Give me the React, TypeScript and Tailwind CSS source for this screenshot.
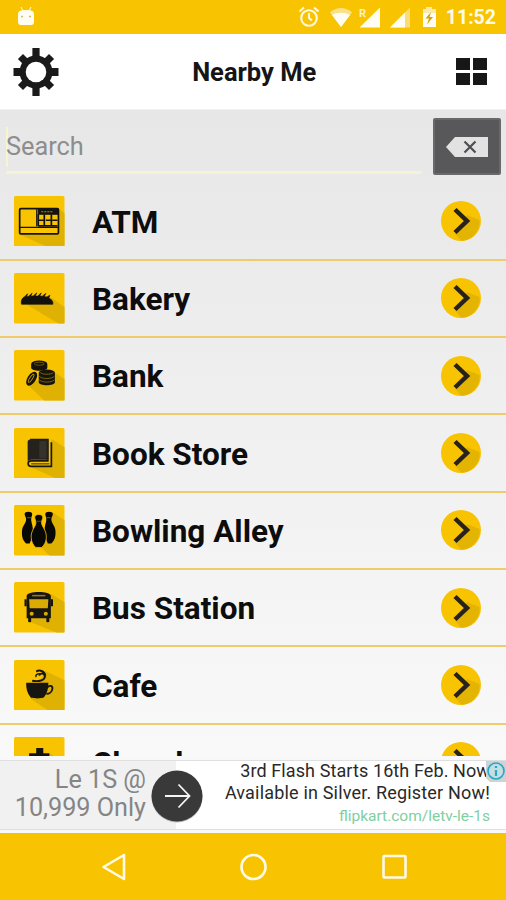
import type { ReactNode } from "react";

type Category = {
	name: string;
	glyph: ReactNode;
	shadow: string;
};

const AtmGlyph = () => (
	<g stroke="#151310" fill="none" strokeWidth="1.7">
		<rect x="5.6" y="12.6" width="38.4" height="25" rx="1.2" />
		<path d="M22.5 13v17M6 31h38" strokeWidth="1.2" />
		<path d="M24 13h20v5H24z" fill="#151310" strokeWidth="1" />
		<path d="M27 15.500h12" stroke="#b68f05" strokeWidth="1" strokeDasharray="2 1" />
		<path d="M24 18v12M30 18v12M37 18v12M24 24h6M31.500 24h5M38 24h5M24 29.500h19" />
	</g>
);

const BreadGlyph = () => (
	<path
		d="M7.500 31c-1-3 .5-6.500 3-7.500l3-3-1 3 2-.5 3.500-3-1.500 3 2.500-.3 3.500-3-1.500 3h2.500l3.500-3-1.500 3 2.500.3 3.500-2.800-1.500 3 2.500.5 3-1.700-1 3c2.500.8 4.500 3 4 6z"
		fill="#12110e"
		stroke="#12110e"
		strokeWidth=".6"
	/>
);

const CoinsGlyph = () => (
	<g fill="#17140e">
		<path d="M17 14v3.500c0 4 16 4 16 0V14z" />
		<ellipse cx="25" cy="13.800" rx="8" ry="3.300" />
		<ellipse cx="25" cy="13.600" rx="5" ry="1.500" fill="none" stroke="#8f7005" strokeWidth=".7" />
		<path d="M24.500 23v9c0 4 16 4 16 0v-9z" />
		<ellipse cx="32.500" cy="22.500" rx="8" ry="3.200" />
		<path
			d="M26 22.300c2 2.300 11 2.300 13 0M25 26c3 3 12 3 15 0M25 29.500c3 3 12 3 15 0"
			fill="none"
			stroke="#a38005"
			strokeWidth=".7"
		/>
		<ellipse cx="17.500" cy="28.500" rx="4.200" ry="7.700" transform="rotate(33 17.500 28.500)" />
		<ellipse
			cx="17"
			cy="28"
			rx="1.300"
			ry="4.700"
			transform="rotate(33 17 28)"
			fill="none"
			stroke="#c69c03"
			strokeWidth=".9"
		/>
	</g>
);

const BookGlyph = () => (
	<g>
		<path d="M16 11.500h17.500v21H17c-4 0-4 5.500 0 5.500h20V14" fill="none" stroke="#1b1916" strokeWidth="1.700" />
		<path d="M16 11.500h18v20H17c-2 0-3 1-3.500 2V14c0-1.500 1-2.500 2.500-2.500z" fill="#25221d" />
		<path d="M25 13h7v17h-7z" fill="#35322c" />
		<path d="M17 35.500h18" stroke="#28241c" strokeWidth="1" />
	</g>
);

const PinsGlyph = () => (
	<g fill="#080806">
		<path d="M10.500 9c0-3 7.500-3 7.500 0 0 2-1 3-1 5 0 4 2.500 7 1.500 14-.6 4-1.500 7-3 10h-3.500C8 35 7.500 29 8 25c.5-5 4-7 4-11 0-2-1.500-3-1.500-5z" />
		<path d="M38.500 9c0-3-7.500-3-7.500 0 0 2 1 3 1 5 0 4-2.500 7-1.500 14 .6 4 1.500 7 3 10H37c4-3 4.500-9 4-13-.5-5-4-7-4-11 0-2 1.500-3 1.500-5z" />
		<path
			d="M20.500 12c0-3.500 8-3.500 8 0 0 2-1.200 3-1.200 5.500 0 4 5.200 7.500 4.700 15-.3 4.500-2 7-4.500 9.500h-6c-2.500-2.500-4.200-5-4.500-9.500-.5-7.500 4.700-11 4.700-15 0-2.500-1.200-3.500-1.200-5.500z"
			stroke="#f2be02"
			strokeWidth=".8"
		/>
		<path d="M13 12.500h4M32 12.500h4M22.300 16h4.500" stroke="#5c4a09" strokeWidth="1" />
	</g>
);

const BusGlyph = () => (
	<g>
		<path
			d="M12.500 14c0-3 6-4 12-4s12 1 12 4v22H35v3c0 1-3 1-3 0v-3H17v3c0 1-3 1-3 0v-3h-1.500z"
			fill="#171511"
		/>
		<path d="M15 17h19l-.5 9h-18z" fill="#d9ab03" />
		<path d="M18 13.500h13" stroke="#9d7c08" strokeWidth="1.500" />
		<path d="M11.500 17v7M37.500 17v7" stroke="#171511" strokeWidth="2.200" />
		<circle cx="17.500" cy="31.500" r="2" fill="#d8ab08" />
		<circle cx="31.500" cy="31.500" r="2" fill="#d8ab08" />
	</g>
);

const CupGlyph = () => (
	<g fill="none" stroke="#171511">
		<path d="M12 22.500h22c0 6-1 10-4 14 0 2-14 2-14 0-3-4-4-8-4-14z" fill="#171511" stroke="none" />
		<path d="M33.500 27c1.500-2.500 5-1.500 4.500 1.500-.4 3-3 5-6 5" strokeWidth="1.800" />
		<path d="M18 20.500c6 1 13 0 12.500-4.500 0-3-5-3.500-5.500-.5" strokeWidth="1.900" />
		<path d="M22 11.500c3-2 8-1 9 4" strokeWidth="2" />
		<path d="M26 13.500c-4 0-5 2-4 3.500" strokeWidth="1.400" />
	</g>
);

const ChurchGlyph = () => (
	<path d="M22 11h7v5h6v5h-5v18h-9V21h-6v-5h7z" fill="#15130f" />
);

const categories: Category[] = [
	{ name: "ATM", glyph: <AtmGlyph />, shadow: "M44 12l6 5v33H32L6 38h38z" },
	{ name: "Bakery", glyph: <BreadGlyph />, shadow: "M38 25l12 9v16h-6L12 31z" },
	{ name: "Bank", glyph: <CoinsGlyph />, shadow: "M40 22l10 7v21H30L14 35z" },
	{ name: "Book Store", glyph: <BookGlyph />, shadow: "M37 11l13 8v31h-8L15 38h22z" },
	{ name: "Bowling Alley", glyph: <PinsGlyph />, shadow: "M38 7l12 8v35H35l-8-8z" },
	{ name: "Bus Station", glyph: <BusGlyph />, shadow: "M37 12l13 8v30h-8L15 39z" },
	{ name: "Cafe", glyph: <CupGlyph />, shadow: "M31 11l19 9v30H34L16 38z" },
	{ name: "Church", glyph: <ChurchGlyph />, shadow: "M35 16l15 9v25H30z" },
];

function StatusBar() {
	return (
		<div className="flex h-[34px] shrink-0 items-center justify-between bg-[#f8c300] pl-[17px] pr-[10px]">
			<svg width="18" height="20" viewBox="0 0 18 20" className="mt-[-2px]">
				<path d="M4 1l2 4M14 1l-2 4" stroke="#fff" strokeWidth="1" />
				<path d="M1 8c0-3 3-3.500 5-4h6c2 .5 5 1 5 4v8c0 2-1 3-3 3H4c-2 0-3-1-3-3z" fill="#fffdf2" />
				<path d="M4 10.500h2M12 10.500h2" stroke="#d2b86b" strokeWidth="1.300" />
			</svg>
			<svg width="139" height="24" viewBox="-2 0 139 24" className="ml-auto mr-[9px]">
				<g fill="none" stroke="#fff9df" strokeWidth="2.100">
					<circle cx="9" cy="13" r="7.800" />
					<path d="M9 8v5l3 2.500M-.5 6.500l4.500-4M18.500 6.500l-4.500-4" />
				</g>
				<path d="M30 7.500c6-6 16-6 22 0L41 22z" fill="#fbe08a" />
				<path d="M32 10c5-3 13-3 18 0l-9 12z" fill="#fffdf2" />
				<path d="M59.500 22.500L80 2.500v20z" fill="#fffdf2" />
				<text x="59" y="12" fill="#fff1b8" className="font-['Roboto'] text-[11px] font-bold">
					R
				</text>
				<path d="M90 22.500l20-20v20z" fill="#fbdc77" />
				<path d="M90 22.500L105 7.500v15z" fill="#fffdf2" />
				<path d="M123 4h3V2h6v2h4v4h-13z" fill="#fbe9ae" />
				<path d="M123 8h13v14h-13z" fill="#fffdf2" />
				<path d="M131 7l-5.500 6.500h3.500l-2 6 6-7.500h-3.500z" fill="#d4a400" />
			</svg>
			<span className="mt-[2px] text-[19.500px] font-bold leading-none text-[#fffbea]">11:52</span>
		</div>
	);
}

function Header() {
	return (
		<div className="flex h-[76px] shrink-0 items-center justify-between border-b border-[#f2f2f2] bg-white pl-[13px] pr-[19px]">
			<svg width="46" height="50" viewBox="-23 -25 46 50">
				<g fill="#1b1a1b">
					<path d="M-3.600-24h7.200v48h-7.200zM-22.500-4h45v8h-45z" />
					<path d="M-3.600-22h7.200v44h-7.200z" transform="rotate(45)" />
					<path d="M-3.600-22h7.200v44h-7.200z" transform="rotate(-45)" />
					<circle r="16.500" />
				</g>
				<circle r="10.300" fill="#fff" />
			</svg>
			<h1 className="mr-[7px] mt-[2px] text-[25.500px] font-bold leading-none text-[#151515]">Nearby Me</h1>
			<div className="grid grid-cols-2 gap-[2.500px]">
				<i className="h-[12.500px] w-[14px] bg-[#171717]" />
				<i className="h-[12.500px] w-[14px] bg-[#171717]" />
				<i className="h-[12.500px] w-[14px] bg-[#171717]" />
				<i className="h-[12.500px] w-[14px] bg-[#171717]" />
			</div>
		</div>
	);
}

function SearchBar() {
	return (
		<div className="flex h-[73.300px] shrink-0 items-start pl-[6px] pr-[5px]">
			<div className="mt-[17px] flex h-[47px] flex-1 items-start border-b-[3px] border-[#f7f2d6]">
				<div className="flex h-[40px] items-center border-l-2 border-[#f7f4d2]">
					<span className="-ml-[2px] text-[25.300px] leading-none text-[#8d8d8d]">Search</span>
				</div>
			</div>
			<button className="ml-[12px] mt-[8px] flex h-[57px] w-[68px] items-center justify-center rounded-[2px] border-2 border-[#69696a] bg-[#58585a]">
				<svg width="42" height="20" viewBox="0 0 42 20">
					<path d="M0 10L9 0h33v20H9z" fill="#e2e2e2" />
					<path d="M18.500 4.500l11 11M29.500 4.500l-11 11" stroke="#4e4e50" strokeWidth="2.200" />
				</svg>
			</button>
		</div>
	);
}

function CategoryRow({ name, glyph, shadow }: Category) {
	return (
		<div className="flex h-[77.330px] shrink-0 items-center border-b-2 border-[#efcb69] pl-[14px] pr-[25px]">
			<svg width="50.500" height="50.500" viewBox="0 0 50 50" className="shrink-0">
				<rect width="50" height="50" rx="1.500" fill="#f8c301" />
				<path d={shadow} fill="#dfb103" />
				{glyph}
			</svg>
			<span className="ml-[27.500px] mt-[3px] flex-1 whitespace-nowrap text-[31.500px] font-bold leading-none text-[#0d0d0d]">
				{name}
			</span>
			<svg width="40" height="40" viewBox="0 0 40 40" className="shrink-0">
				<circle cx="20" cy="20" r="20" fill="#f8c301" />
				<path d="M26 14l12.500 5c1 10-7 20-18 20.800L14 33z" fill="#e4b403" />
				<path d="M14 8.500L26 20 14 31.500" fill="none" stroke="#27231c" strokeWidth="4.500" />
			</svg>
		</div>
	);
}

function AdBanner() {
	return (
		<div className="relative mt-[4px] flex h-[70px] shrink-0 border-y border-[#dfdfdf] bg-white">
			<div className="w-[176px] bg-[#f1f1f1] pr-[30px] pt-[5px] text-right text-[25.200px] leading-[28px] text-[#858585]">
				<p className="whitespace-nowrap">Le 1S @</p>
				<p className="whitespace-nowrap">10,999 Only</p>
			</div>
			<div className="flex-1 whitespace-nowrap pr-[16px] text-right text-[#292929]">
				<p className="text-[18px] leading-[19px] tracking-[0.1px]">3rd Flash Starts 16th Feb. Now</p>
				<p className="text-[18px] leading-[25px] tracking-[0.180px]">Available in Silver. Register Now!</p>
				<p className="text-[15.500px] leading-[22px] text-[#80cfa0]">flipkart.com/letv-le-1s</p>
			</div>
			<svg width="54" height="54" viewBox="0 0 54 54" className="absolute left-[150px] top-[8px]">
				<circle cx="27" cy="28" r="25.500" fill="#b9b9b9" />
				<circle cx="27" cy="27" r="25.500" fill="#39393a" />
				<path d="M15 27h24M28.500 15.500L39.500 27 28.500 38.500" fill="none" stroke="#f5f5f5" strokeWidth="1.800" />
			</svg>
			<svg width="20" height="21" viewBox="0 0 20 21" className="absolute right-0 top-0">
				<path d="M0 0h20v21H4L0 17z" fill="#d0d3d5" />
				<circle cx="10" cy="10" r="8" fill="#c5dde3" stroke="#25a9c4" strokeWidth="1.600" />
				<path d="M10 5v2M10 9v6" stroke="#25a9c4" strokeWidth="2.200" />
			</svg>
		</div>
	);
}

function NavBar() {
	return (
		<div className="mt-[3px] flex flex-1 items-center bg-[#f8c300] pl-[101px]">
			<svg width="306" height="28" viewBox="0 0 306 28" fill="none" stroke="#fffbe8" strokeWidth="2.600">
				<path d="M2.500 14L23 2v24z" strokeLinejoin="round" />
				<circle cx="152.500" cy="14" r="12" />
				<rect x="282.500" y="3" width="22" height="21.500" rx="1" />
			</svg>
		</div>
	);
}

export default function App() {
	return (
		<div className="flex h-[900px] w-[506px] flex-col overflow-hidden bg-[#f8f8f8] font-['Roboto',sans-serif]">
			<StatusBar />
			<Header />
			<div className="flex h-[646px] shrink-0 flex-col overflow-hidden bg-linear-to-b from-[#e7e7e7] to-[#f9f9f9]">
				<SearchBar />
				{categories.map((category) => (
					<CategoryRow key={category.name} {...category} />
				))}
			</div>
			<AdBanner />
			<NavBar />
		</div>
	);
}
